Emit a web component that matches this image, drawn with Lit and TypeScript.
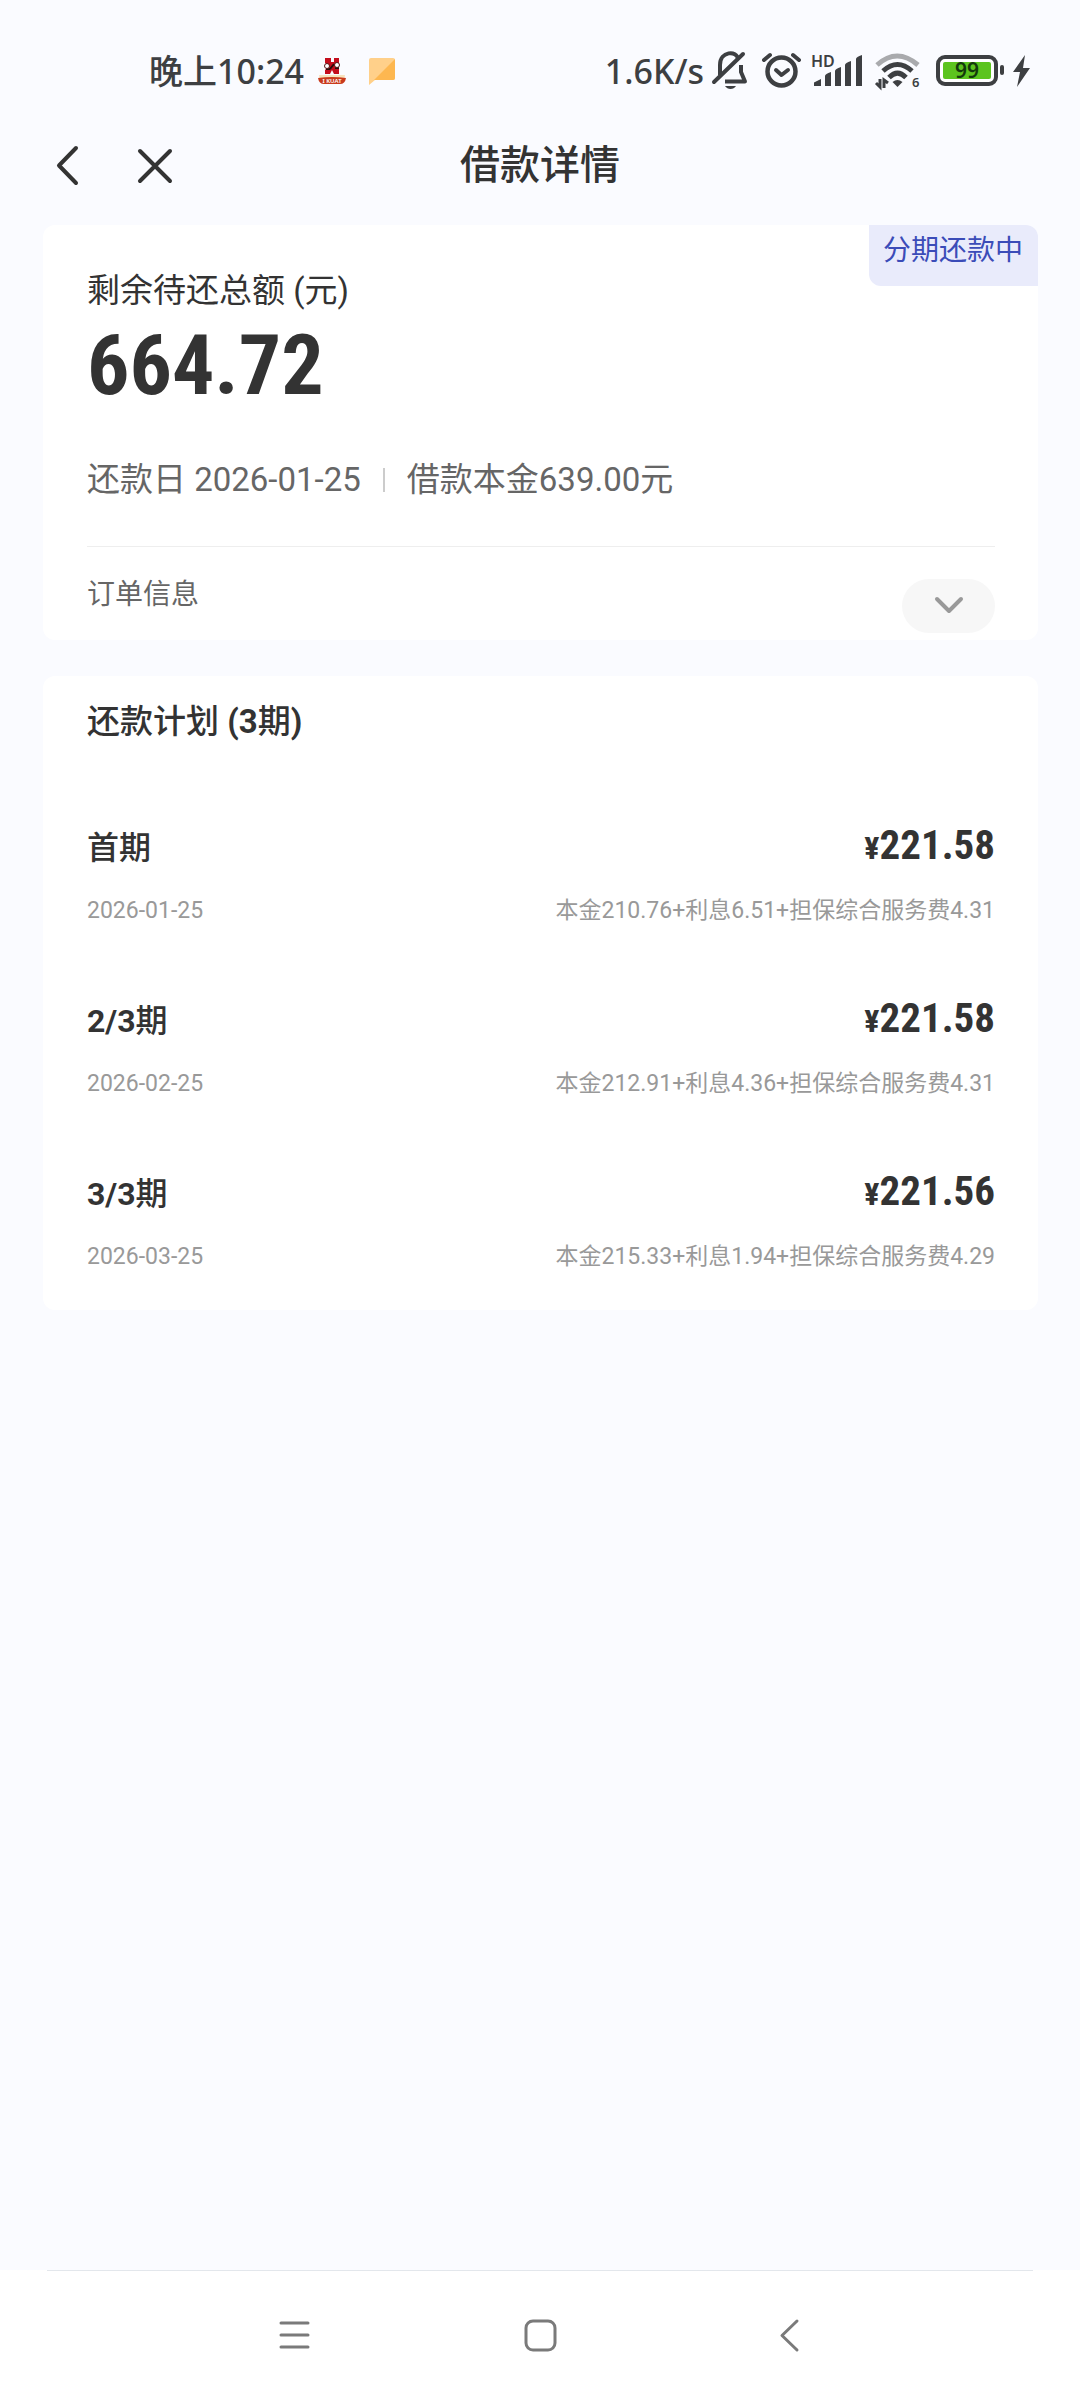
import { LitElement, html, css, svg } from "lit";
import { customElement, property, state } from "lit/decorators.js";

interface Installment {
  index: string;
  unit: string;
  date: string;
  amount: string;
  detail: string;
}

const installments: Installment[] = [
  { index: "", unit: "首期", date: "2026-01-25", amount: "221.58", detail: "本金210.76+利息6.51+担保综合服务费4.31" },
  { index: "2/3", unit: "期", date: "2026-02-25", amount: "221.58", detail: "本金212.91+利息4.36+担保综合服务费4.31" },
  { index: "3/3", unit: "期", date: "2026-03-25", amount: "221.56", detail: "本金215.33+利息1.94+担保综合服务费4.29" },
];

@customElement("status-bar")
export class StatusBar extends LitElement {
  static styles = css`
    :host {
      display: block;
      font-family: "Noto Sans", "Noto Sans CJK SC", sans-serif;
      color: #3d3f42;
    }
    .bar {
      display: flex;
      justify-content: space-between;
      align-items: center;
      height: 94px;
      padding: 24px 49px 0 149px;
    }
    .group {
      display: flex;
      align-items: center;
    }
    .left {
      gap: 14px;
    }
    .right {
      gap: 8px;
    }
    .text {
      font-size: 34px;
      font-weight: 500;
      line-height: 40px;
      white-space: nowrap;
    }
    svg {
      display: block;
      flex: none;
      overflow: visible;
    }
    .label {
      font-family: "Noto Sans", sans-serif;
      font-weight: 600;
    }
  `;

  render() {
    return html`
      <div class="bar">
        <div class="group left">
          <span class="text">晚上10:24</span>
          <svg width="28" height="28" viewBox="0 0 28 28" aria-hidden="true">
            <path d="M1 18 L27 18 L26 24 L2 24 Z" fill="#f7e3bd" />
            <path d="M7 1 H13 V5 H16 V1 H21 V6 L17 9 L21 12 V17 H16 L14 13 L12 17 H7 V13 L11 9 L7 6 Z" fill="#c40d1c" />
            <path d="M8 12 H12 M17 11 H21 M12 12 L16 7" stroke="#2a0b0b" stroke-width="2" />
            <circle cx="9" cy="9" r="2.500" fill="#fff" stroke="#561212" />
            <circle cx="19" cy="8" r="2.500" fill="#fff" stroke="#561212" />
            <path d="M0 21 Q14 19 28 21 Q27 27 22 27 H6 Q1 27 0 21 Z" fill="#c93a1c" />
            <text class="label" x="14" y="26" font-size="6" text-anchor="middle" fill="#fff">I KUAT</text>
          </svg>
          <svg width="44" height="28" viewBox="0 0 44 28" aria-hidden="true">
            <path d="M11 1 H33 Q35 1 35 3 V21 Q35 23 33 23 H15 L9 28 V3 Q9 1 11 1 Z" fill="#ffd08a" />
            <path d="M35 2 V21 Q35 23 33 23 H14 Z" fill="#fdb750" />
          </svg>
        </div>
        <div class="group right">
          <span class="text">1.6K/s</span>
          <svg width="40" height="40" viewBox="2 0 40 40" fill="none" stroke="#3d3f42" stroke-width="4" aria-label="静音">
            <path d="M10 24 V14 C10 0 27 -1 28 8" />
            <path d="M31 14 V21 L35 30.500 H15" stroke-linejoin="round" />
            <path d="M4 31 L33 3" stroke-linecap="round" />
            <path d="M15 35 H26 Q24 38 20.500 38 Q17 38 15 35 Z" fill="#3d3f42" stroke="none" />
          </svg>
          <svg width="42" height="40" viewBox="0 0 42 40" fill="none" stroke="#3d3f42" stroke-linecap="round" aria-label="闹钟">
            <circle cx="21.500" cy="20.500" r="14" stroke-width="4.500" />
            <path d="M16 19 L21.500 24 L28 19" stroke-width="4" stroke-linejoin="round" />
            <path d="M4 9 L10 4 M33 4 L39 9" stroke-width="4" />
          </svg>
          <svg width="54" height="40" viewBox="0 0 54 40" fill="#3d3f42" aria-label="信号">
            <text class="label" x="1" y="16" font-size="16">HD</text>
            <path d="M4 31.500 L11 28 V35 H4 Z" />
            <path d="M15 25 Q15 23 21 21 V35 H15 Z" />
            <path d="M25 20 Q25 18 31 16 V35 H25 Z" />
            <path d="M35 14 Q35 12 41 10 V35 H35 Z" />
            <path d="M46 8 Q46 6 52 4 V35 H46 Z" />
          </svg>
          <svg width="56" height="40" viewBox="0 0 56 40" fill="none" aria-label="无线网络">
            <path d="M5 14 Q25 -4 46 14" stroke="#a9aaad" stroke-width="5" />
            <path d="M11 20 Q25.500 7 40 20" stroke="#3d3f42" stroke-width="5" />
            <path d="M17 26.500 Q25.500 18 34 26.500" stroke="#3d3f42" stroke-width="5" />
            <path d="M20.500 31 Q25.500 27 30.500 31 L25.500 36 Z" fill="#3d3f42" />
            <path d="M8 28 V36 L4 32 M12 37 V29 L16 32" stroke="#3d3f42" stroke-width="3" />
            <text class="label" x="40" y="36" font-size="13" fill="#3d3f42">6</text>
          </svg>
          <svg width="68" height="40" viewBox="0 0 68 40" aria-label="电量">
            <rect x="2" y="6" width="58" height="27" rx="7" fill="#fff" stroke="#3d3f42" stroke-width="4" />
            <rect x="7" y="11" width="48" height="17" rx="2" fill="#5cc41e" />
            <rect x="64" y="14" width="4" height="10" rx="2" fill="#3d3f42" />
            <text class="label" x="31" y="27" font-size="21" text-anchor="middle" fill="#143a0c">99</text>
          </svg>
          <svg width="19" height="40" viewBox="0 0 19 40" aria-label="充电中">
            <path d="M13 4 L1 21 H8 L5 36 L18 17 H11 Z" fill="#3d3f42" />
          </svg>
        </div>
      </div>
    `;
  }
}

@customElement("plan-row")
export class PlanRow extends LitElement {
  @property({ attribute: false }) item!: Installment;

  static styles = css`
    :host {
      display: block;
    }
    .row {
      display: flex;
      flex-direction: column;
      gap: 23px;
    }
    .line {
      display: flex;
      justify-content: space-between;
      align-items: center;
      white-space: nowrap;
    }
    .title {
      margin: 0;
      font-size: 32px;
      line-height: 48px;
      font-weight: 500;
      color: #333;
    }
    .amount {
      font-family: "Roboto Condensed", Roboto, sans-serif;
      font-size: 41px;
      line-height: 42px;
      padding-bottom: 6px;
      font-weight: 700;
      color: #333;
    }
    .yen {
      font-size: 32px;
      line-height: 32px;
    }
    .sub {
      font-size: 23px;
      line-height: 32px;
      color: #999;
    }
  `;

  render() {
    const { index, unit, date, amount, detail } = this.item;
    return html`
      <div class="row">
        <div class="line">
          <h3 class="title"><b>${index}</b>${unit}</h3>
          <span class="amount"><span class="yen">¥</span>${amount}</span>
        </div>
        <div class="line sub">
          <time>${date}</time>
          <span>${detail}</span>
        </div>
      </div>
    `;
  }
}

@customElement("app-root")
export class AppRoot extends LitElement {
  @state() private expanded = false;

  static styles = css`
    :host {
      display: block;
      font-family: Roboto, "Noto Sans CJK SC", sans-serif;
      color: #333;
    }
    .page {
      display: flex;
      flex-direction: column;
      min-height: 100vh;
      background: #fafbff;
    }
    button {
      display: block;
      padding: 0;
      border: 0;
      background: none;
      cursor: pointer;
    }
    svg {
      display: block;
    }
    .header {
      display: grid;
      grid-template-columns: 1fr auto 1fr;
      align-items: center;
      height: 94px;
      padding: 0 43px;
    }
    .actions {
      display: flex;
      gap: 38px;
    }
    .page-title {
      margin: 0;
      padding-top: 2px;
      font-size: 40px;
      line-height: 48px;
      font-weight: 500;
    }
    .content {
      flex: 1;
      display: flex;
      flex-direction: column;
      gap: 36px;
      padding: 13px 42px 36px 43px;
    }
    .card {
      position: relative;
      padding: 0 43px 0 44px;
      border-radius: 12px;
      background: #fff;
    }
    .badge {
      position: absolute;
      top: 0;
      right: 0;
      height: 49px;
      padding: 12px 15px 0 14px;
      border-radius: 0 12px 0 12px;
      background: #e9ebfb;
      color: #3b4cb8;
      font-size: 28px;
      line-height: 28px;
    }
    .label {
      margin: 0;
      padding-top: 42px;
      font-size: 33px;
      line-height: 48px;
    }
    .total {
      margin: 15px 0 0;
      font-family: "Roboto Condensed", Roboto, sans-serif;
      font-size: 84px;
      line-height: 72px;
      font-weight: 700;
    }
    .meta {
      display: flex;
      align-items: center;
      margin-top: 54px;
      padding-bottom: 42px;
      border-bottom: 1px solid #eee;
      font-size: 33px;
      line-height: 48px;
      color: #666;
      white-space: nowrap;
    }
    .separator {
      width: 2px;
      height: 24px;
      margin: 0 22px;
      background: #ccc;
    }
    .order {
      display: flex;
      justify-content: space-between;
      align-items: flex-start;
      padding: 32px 0 7px;
      font-size: 28px;
      line-height: 32px;
      color: #666;
    }
    .toggle {
      display: grid;
      place-items: center;
      width: 93px;
      height: 54px;
      border-radius: 27px;
      background: #f7f7f7;
    }
    .plan {
      padding-top: 22px;
      padding-bottom: 37px;
    }
    .plan-title {
      margin: 0 0 78px;
      font-size: 33px;
      line-height: 48px;
      font-weight: 500;
    }
    .rows {
      display: flex;
      flex-direction: column;
      gap: 70px;
    }
    .nav {
      background: #fff;
    }
    .rule {
      height: 1px;
      margin: 0 47px;
      background: #e3e7ec;
    }
    .keys {
      display: flex;
      justify-content: center;
      align-items: center;
      gap: 198px;
      height: 127px;
      padding-bottom: 2px;
    }
  `;

  private icon(size: number, body: unknown, width: number, color: string) {
    return html`<svg
      width=${size}
      height=${size}
      viewBox="0 0 ${size} ${size}"
      fill="none"
      stroke=${color}
      stroke-width=${width}
      stroke-linecap="round"
      stroke-linejoin="round"
      aria-hidden="true"
    >
      ${body}
    </svg>`;
  }

  render() {
    return html`
      <div class="page">
        <status-bar></status-bar>
        <header class="header">
          <div class="actions">
            <button aria-label="返回">
              ${this.icon(48, svg`<path d="M33 7 L16 24.500 L33 42" />`, 4, "#333")}
            </button>
            <button aria-label="关闭">
              ${this.icon(48, svg`<path d="M11 10 L41 40 M41 10 L11 40" />`, 4, "#333")}
            </button>
          </div>
          <h1 class="page-title">借款详情</h1>
        </header>
        <main class="content">
          <section class="card">
            <span class="badge">分期还款中</span>
            <p class="label">剩余待还总额 (元)</p>
            <p class="total">664.72</p>
            <div class="meta">
              <span>还款日 2026-01-25</span>
              <span class="separator"></span>
              <span>借款本金639.00元</span>
            </div>
            <div class="order">
              <span>订单信息</span>
              <button
                class="toggle"
                aria-label="展开订单信息"
                aria-expanded=${this.expanded}
                @click=${() => (this.expanded = !this.expanded)}
              >
                ${this.icon(32, svg`<path d="M4 9 L16 21 L28 9" />`, 4, "#999")}
              </button>
            </div>
          </section>
          <section class="card plan">
            <h2 class="plan-title">还款计划 <b>(3</b>期<b>)</b></h2>
            <div class="rows">
              ${installments.map((item) => html`<plan-row .item=${item}></plan-row>`)}
            </div>
          </section>
        </main>
        <nav class="nav">
          <div class="rule"></div>
          <div class="keys">
            <button aria-label="菜单">
              ${this.icon(48, svg`<path d="M11 12 H38 M11 24 H38 M11 36 H38" />`, 3, "#7a7a7a")}
            </button>
            <button aria-label="主页">
              ${this.icon(48, svg`<rect x="10" y="10" width="29" height="29" rx="7" />`, 3, "#7a7a7a")}
            </button>
            <button aria-label="后退">
              ${this.icon(48, svg`<path d="M35 10 L20 24.500 L35 39" />`, 3, "#7a7a7a")}
            </button>
          </div>
        </nav>
      </div>
    `;
  }
}
